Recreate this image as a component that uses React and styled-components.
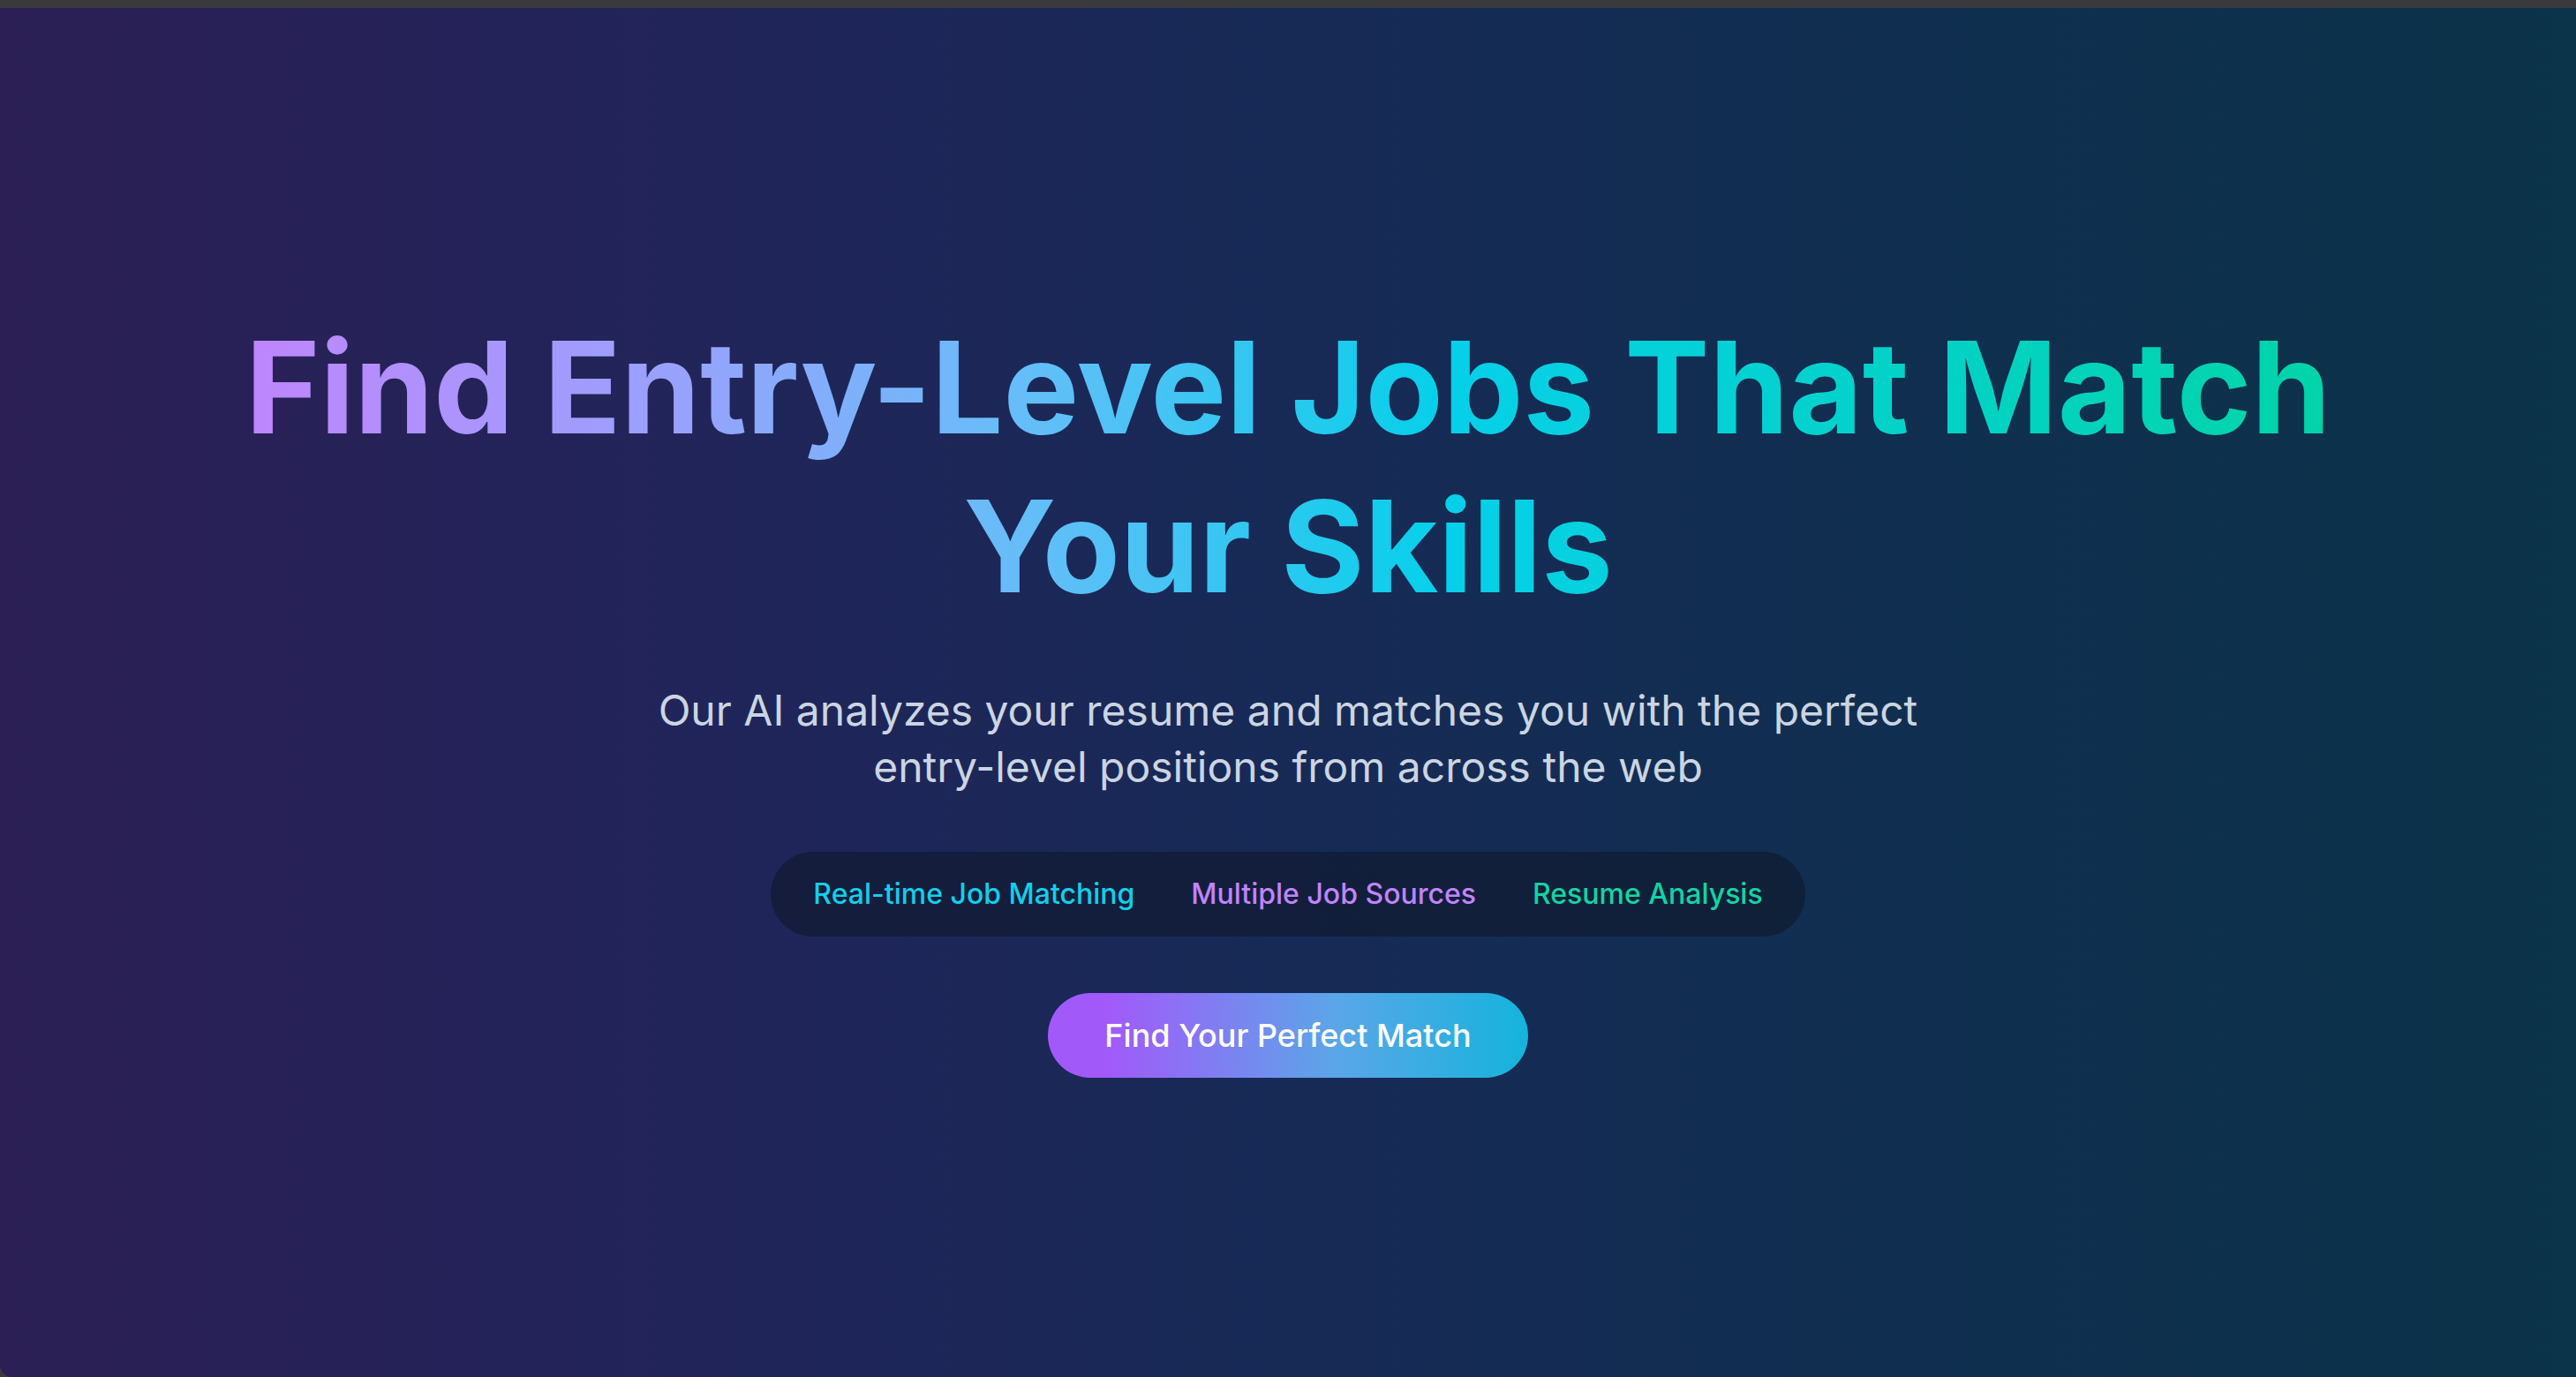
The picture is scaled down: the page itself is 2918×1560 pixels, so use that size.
import React from "react";
import styled, { createGlobalStyle } from "styled-components";

const GlobalStyle = createGlobalStyle`
  html, body {
    margin: 0;
    padding: 0;
    background: #3a3a3c;
  }
  body {
    font-family: Inter, "Noto Sans", "Liberation Sans", sans-serif;
  }
  * {
    box-sizing: border-box;
  }
`;

const features = [
  { label: "Real-time Job Matching", color: "#0fd0ea" },
  { label: "Multiple Job Sources", color: "#c084fc" },
  { label: "Resume Analysis", color: "#10d4a4" },
];

function App() {
  return (
    <>
      <GlobalStyle />
      <TopBar />
      <Hero>
        <Heading>Find Entry-Level Jobs That Match Your Skills</Heading>
        <Subtitle>
          Our AI analyzes your resume and matches you with the perfect
          entry-level positions from across the web
        </Subtitle>
        <FeaturePill>
          {features.map((f) => (
            <Feature key={f.label} $color={f.color}>
              {f.label}
            </Feature>
          ))}
        </FeaturePill>
        <CtaButton>Find Your Perfect Match</CtaButton>
      </Hero>
    </>
  );
}

const TopBar = styled.div`
  height: 9px;
  background: #3a3a3c;
`;

const Hero = styled.main`
  min-height: calc(100vh - 9px);
  display: flex;
  flex-direction: column;
  align-items: center;
  justify-content: center;
  gap: 64px;
  padding: 0 48px;
  background: linear-gradient(
    to right,
    #2b1f55 0%,
    #22245a 25%,
    #172a56 50%,
    #102f50 75%,
    #0b3349 100%
  );
  border-bottom-left-radius: 14px;
`;

const Heading = styled.h1`
  margin: 0;
  max-width: 2420px;
  font-size: 144px;
  line-height: 180px;
  font-weight: 700;
  letter-spacing: 0;
  text-align: center;
  background: linear-gradient(
    to right,
    #c084fc 0%,
    #9ca0fc 20%,
    #64bef8 38%,
    #06d0ea 57%,
    #00d4a6 100%
  );
  -webkit-background-clip: text;
  background-clip: text;
  color: transparent;
`;

const Subtitle = styled.p`
  margin: 0;
  max-width: 1536px;
  font-size: 48px;
  line-height: 64px;
  font-weight: 400;
  color: #cbd5e1;
  text-align: center;
`;

const FeaturePill = styled.div`
  display: flex;
  align-items: center;
  gap: 64px;
  padding: 24px 48px;
  border-radius: 48px;
  background: rgba(15, 23, 42, 0.6);
`;

const Feature = styled.span`
  font-size: 32px;
  line-height: 48px;
  font-weight: 500;
  color: ${(p) => p.$color};
`;

const CtaButton = styled.button`
  border: none;
  cursor: pointer;
  padding: 24px 64px;
  border-radius: 48px;
  font-family: inherit;
  font-size: 36px;
  line-height: 48px;
  font-weight: 500;
  color: #ffffff;
  background: linear-gradient(to right, #a259fa 0%, #a259fa 12%, #5ba6e8 60%, #14b4dc 100%);
`;

export default App;
